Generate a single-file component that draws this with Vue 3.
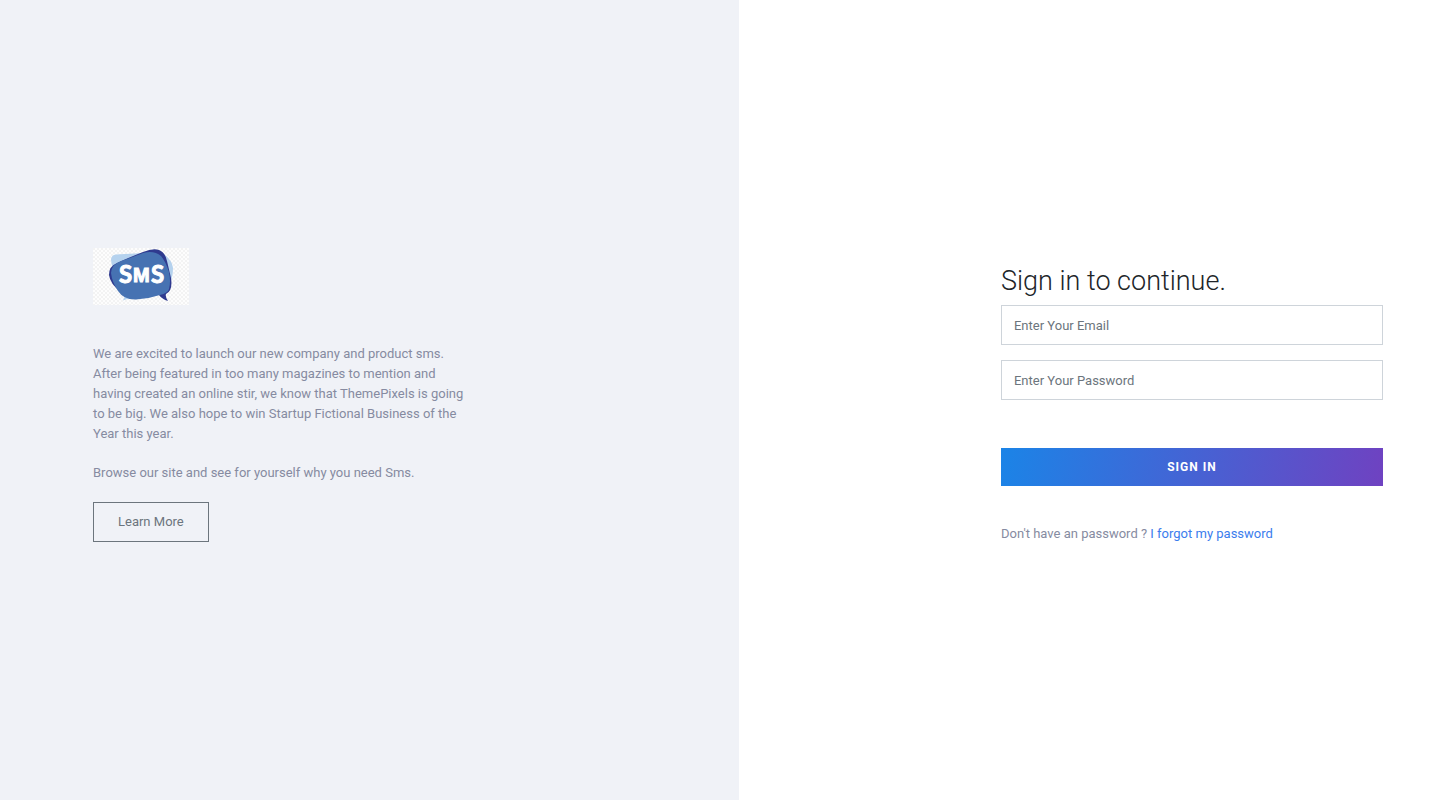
<script setup>
import { ref } from 'vue'

const email = ref('')
const password = ref('')
</script>

<template>
  <main class="page">
    <section class="intro">
      <div class="intro-content">
        <svg class="logo" viewBox="0 0 96 57" role="img" aria-label="SMS">
          <defs>
            <pattern id="checks" width="4" height="4" patternUnits="userSpaceOnUse">
              <rect width="4" height="4" fill="#fdfdfd" />
              <rect width="2" height="2" fill="#f3f3f3" />
              <rect x="2" y="2" width="2" height="2" fill="#f3f3f3" />
            </pattern>
          </defs>
          <rect width="96" height="57" fill="url(#checks)" />
          <path fill="#b5d2ee" d="M18 12Q18 7 23 6.500L51 5L68 4Q79 11 80 20Q80 29 76 38L60 48L39 50Q35 50 30 52.500Q32 49 32 46L22 36Z" />
          <path fill="#2f3a8f" d="M16 27Q16 18 24 15Q37 9 50 4Q60 0 66 2Q72 4 74 13L78 30Q80 43 73 46Q72 49 75 53Q69 51 66 47L28 44Q17 36 16 27Z" />
          <path fill="#4672b2" d="M18 25Q18 17 28 13Q40 9 50 5Q61 2 68 8Q73 14 76 24Q78 34 76 41Q75 45 67 47Q55 51 43 51.500Q31 52 25 43Q19 34 18 25Z" />
          <text class="logo-text" y="35"><tspan x="26">S</tspan><tspan class="logo-m" x="40" dy="-1">M</tspan><tspan x="58" dy="1">S</tspan></text>
        </svg>
        <p class="copy">
          We are excited to launch our new company and product sms. After being featured in too many
          magazines to mention and having created an online stir, we know that ThemePixels is going
          to be big. We also hope to win Startup Fictional Business of the Year this year.
        </p>
        <p class="copy">Browse our site and see for yourself why you need Sms.</p>
        <a class="learn-more" href="#">Learn More</a>
      </div>
    </section>

    <section class="signin">
      <form class="signin-form" @submit.prevent>
        <h1>Sign in to continue.</h1>
        <input v-model="email" type="email" aria-label="Email" placeholder="Enter Your Email" />
        <input v-model="password" type="password" aria-label="Password" placeholder="Enter Your Password" />
        <button type="submit">SIGN IN</button>
        <p class="help">Don't have an password ? <a href="#">I forgot my password</a></p>
      </form>
    </section>
  </main>
</template>

<style>
body {
  margin: 0;
}
</style>

<style scoped>
.page {
  display: grid;
  grid-template-columns: 26fr 25fr;
  min-height: 100vh;
  background: #fff;
  color: #868ba1;
  font: 13px/20px Roboto, sans-serif;
}

.page * {
  box-sizing: border-box;
}

.intro,
.signin {
  display: flex;
  align-items: center;
}

.intro {
  padding-bottom: 10px;
  padding-left: 93px;
  background: #f0f2f7;
}

.intro-content,
.signin-form {
  width: 100%;
  max-width: 382px;
}

.logo {
  display: block;
  width: 96px;
  height: 57px;
  margin-bottom: 39px;
}

.logo-text {
  fill: #fff;
  stroke: #fff;
  stroke-width: 1px;
  font: 700 24px Lato, sans-serif;
}

.logo-m {
  font: 700 20px "Liberation Sans", sans-serif;
}

.copy {
  max-width: 376px;
  margin: 0 0 19px;
}

.learn-more {
  display: inline-block;
  padding: 9px 24px;
  border: 1px solid #6c757d;
  color: #6c757d;
  text-decoration: none;
}

.signin {
  justify-content: flex-end;
  padding-top: 8px;
  padding-right: 67px;
}

.signin-form {
  display: flex;
  flex-direction: column;
}

h1 {
  margin: 0 0 7px;
  color: #212529;
  font-size: 27px;
  font-weight: 300;
  line-height: 34px;
}

input {
  width: 100%;
  height: 40px;
  margin: 0 0 15px;
  padding: 0 12px;
  border: 1px solid #ced4da;
  border-radius: 0;
  background: #fff;
  color: #495057;
  font: inherit;
}

input::placeholder {
  color: #6c757d;
  opacity: 1;
}

button {
  height: 38px;
  margin: 33px 0 38px;
  padding: 0;
  border: 0;
  background: linear-gradient(100deg, #1b84e7, #6f42c1);
  color: #fff;
  font: 700 12px/20px Roboto, sans-serif;
  letter-spacing: 1px;
  cursor: pointer;
}

.help {
  margin: 0;
}

.help a {
  color: #3b7ded;
  text-decoration: none;
}
</style>
